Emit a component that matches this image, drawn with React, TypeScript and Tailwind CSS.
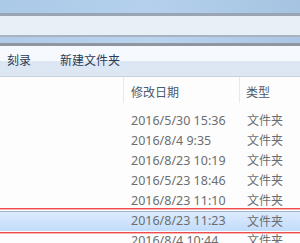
import React from 'react';

const rows = [
  { date: '2016/5/30 15:36', type: '文件夹' },
  { date: '2016/8/4 9:35', type: '文件夹' },
  { date: '2016/8/23 10:19', type: '文件夹' },
  { date: '2016/5/23 18:46', type: '文件夹' },
  { date: '2016/8/23 11:10', type: '文件夹' },
  { date: '2016/8/23 11:23', type: '文件夹', selected: true },
  { date: '2016/8/4 10:44', type: '文件夹' },
];

const App: React.FC = () => {
  return (
    <div
      className="relative w-[300px] h-[243px] overflow-hidden bg-[#fdfdfd] text-[12px] leading-none"
      style={{ fontFamily: '"Noto Sans", "Noto Sans CJK SC", sans-serif' }}
    >
      {/* window frame + address bar */}
      <div className="h-[13px] bg-gradient-to-r from-[#abc9e8] via-[#b4d0ec] to-[#a6c3e1]" />
      <div className="h-[3px] bg-[#9aa5b3]" />
      <div className="h-[19px] bg-[#e9eff6]" />
      <div className="h-[2px] bg-[#a8b3c1]" />
      <div className="h-[6px] bg-gradient-to-r from-[#b0cbe8] via-[#bad4ee] to-[#aac6e4]" />
      <div className="h-[3px] bg-[#8f969f]" />

      {/* toolbar */}
      <div className="relative h-[30px] flex items-center bg-gradient-to-b from-[#f6f9fd] from-50% to-[#dde7f3] to-50% text-[#283c58]">
        <span className="ml-[7px]">刻录</span>
        <span className="ml-[29px]">新建文件夹</span>
      </div>
      <div className="h-[1px] bg-[#c9d2de]" />

      {/* column headers */}
      <div className="flex h-[26px] text-[#4b5a6f]">
        <div className="w-[124px] border-r border-[#e6eaf0]" />
        <div className="w-[116px] pl-[7px] pt-[10px] border-r border-[#e6eaf0]">修改日期</div>
        <div className="pl-[6px] pt-[10px]">类型</div>
      </div>
      <div className="h-[8px]" />

      {/* rows */}
      <div className="flex flex-col text-[#6d6d6d] text-[12.5px]">
        {rows.map((r, i) => (
          <div
            key={i}
            className={`flex items-center h-[20px] ${
              r.selected
                ? 'border-t border-[#9fb4cd] bg-gradient-to-b from-[#dcebfd] to-[#c2dcfb]'
                : ''
            }`}
          >
            <div className="w-[124px]" />
            <div className="w-[116px] pl-[7px]">{r.date}</div>
            <div className="pl-[7px] text-[12px]">{r.type}</div>
          </div>
        ))}
      </div>

      {/* red annotation lines */}
      <div className="absolute left-0 right-0 top-[208px] h-[1px] bg-[#ee4b4b]" />
      <div className="absolute left-0 right-0 top-[209px] h-[1px] bg-[#f9b4b4]" />
      <div className="absolute left-0 right-0 top-[232px] h-[1px] bg-[#ee4b4b]" />
      <div className="absolute left-0 right-0 top-[233px] h-[1px] bg-[#f9b4b4]" />
    </div>
  );
};

export default App;
